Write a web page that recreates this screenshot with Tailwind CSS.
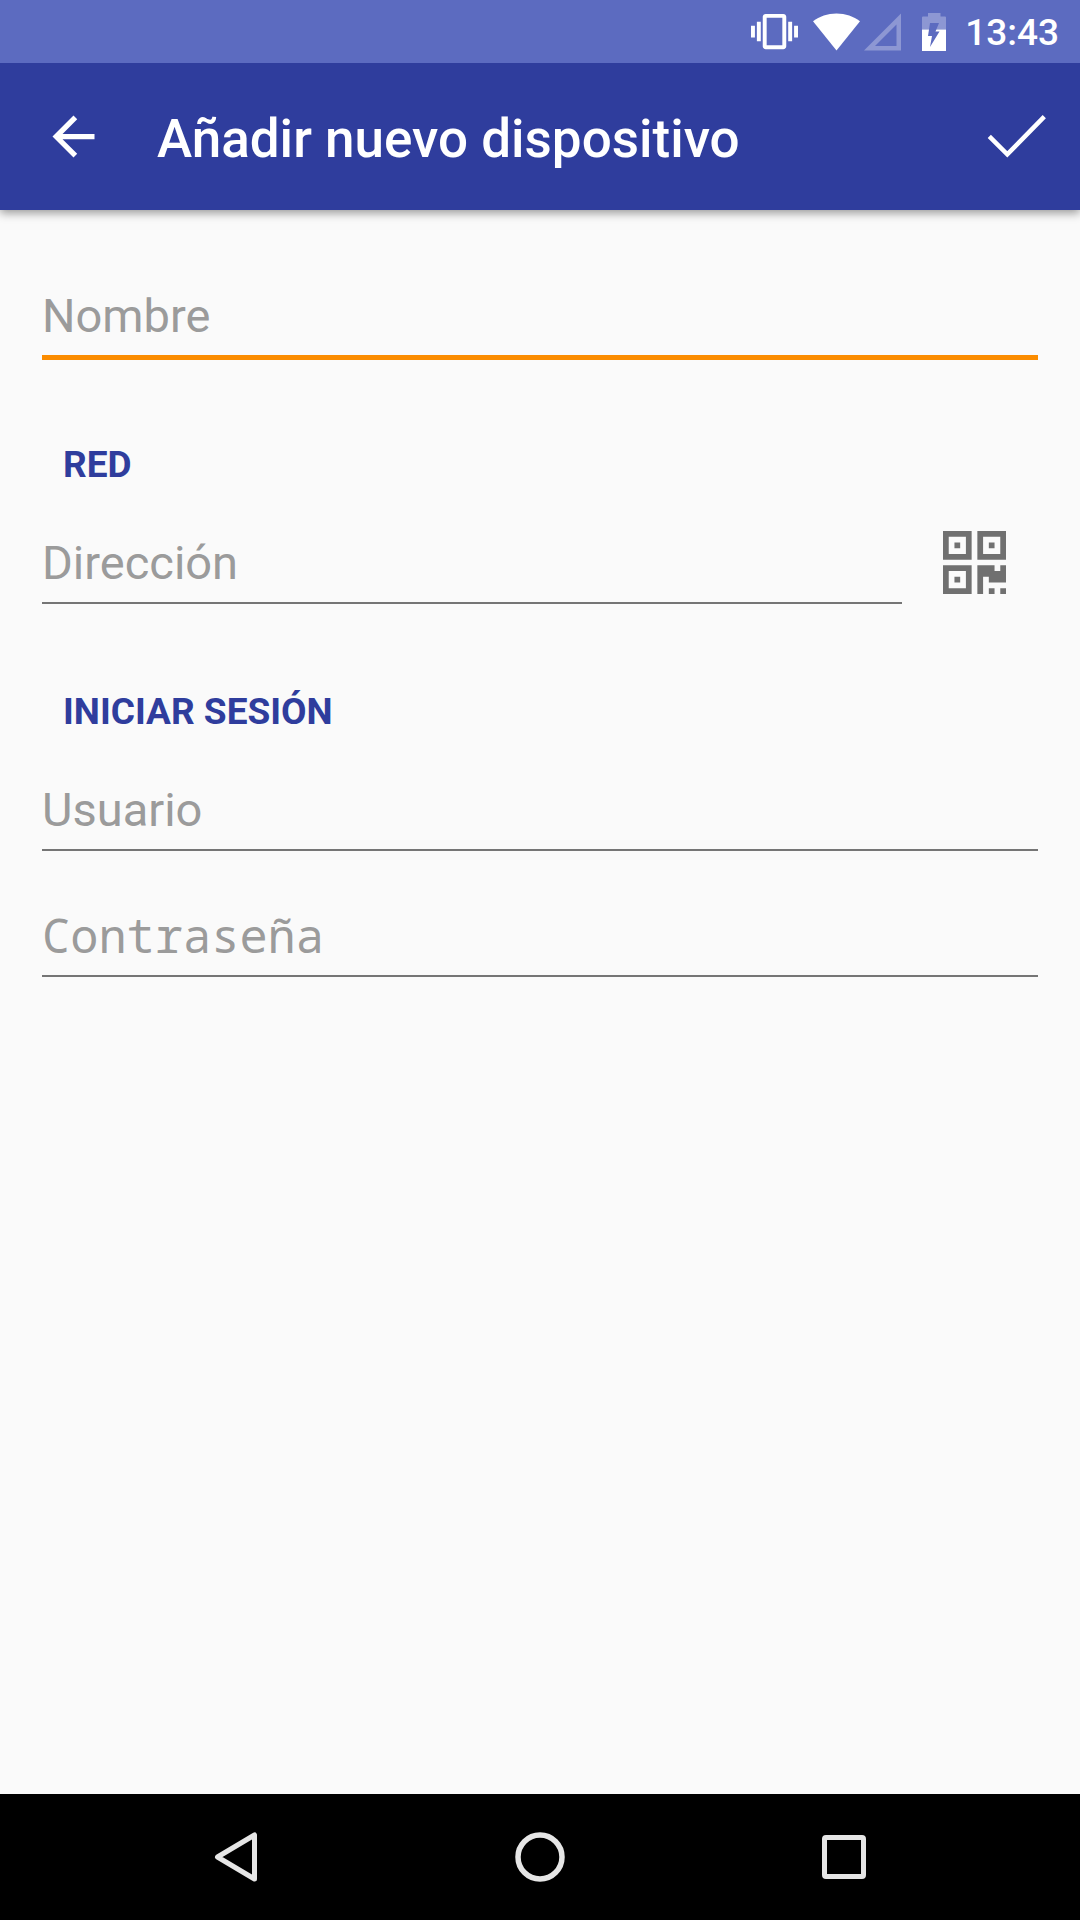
<!DOCTYPE html>
<html lang="es">

<head>
    <meta charset="UTF-8">
    <meta name="viewport" content="width=device-width, initial-scale=1.0">
    <title>Añadir nuevo dispositivo</title>
    <script src="https://cdn.jsdelivr.net/npm/@tailwindcss/browser@4"></script>
</head>

<body class="min-h-screen flex flex-col bg-[#fafafa] font-['Roboto',sans-serif]">
    <!-- Barra de estado -->
    <div class="relative z-10 h-[63px] flex items-center justify-end pr-[21px] bg-[#5c6bc0] text-white">
        <svg class="w-[47px] h-[47px] mr-[15px]" viewBox="0 0 24 24" fill="currentColor" aria-hidden="true">
            <path d="M0 15h2V9H0v6zm3 2h2V7H3v10zm19-8v6h2V9h-2zm-3 8h2V7h-2v10zM16.5 3h-9C6.67 3 6 3.67 6 4.5v15c0 .83.67 1.5 1.5 1.5h9c.83 0 1.5-.67 1.5-1.5v-15c0-.83-.67-1.5-1.5-1.5zM16 19H8V5h8v14z" />
        </svg>
        <svg class="w-[47px] h-[38px] mr-1" viewBox="0 0 47 38" fill="currentColor" aria-hidden="true">
            <path d="M23.5 37.500L0 8.300C6.500 3.300 14.500.500 23.500.500S40.500 3.300 47 8.300z" />
        </svg>
        <svg class="w-[37px] h-[38px] mr-[21px]" viewBox="0 0 37 38" fill="currentColor" fill-rule="evenodd" aria-hidden="true">
            <path class="opacity-30" d="M37 .5v37H0zM32.500 11.500L11 33h21.500z" />
        </svg>
        <svg class="w-[24px] h-[38px] mr-[19px]" viewBox="0 0 24 38" aria-hidden="true">
            <path fill="#fff" fill-opacity=".3" d="M0 16.500V4.500q0-1 1-1h5V0h12.500v3.500H23q1 0 1 1v12z" />
            <path fill="#fff" d="M0 16.500h24V38H0z" />
            <path fill="#5c6bc0" d="M8 10h9l-3.500 8.500h4L8 34l2-11H6z" />
        </svg>
        <span class="pt-[3px] text-[37px] leading-[44px] font-medium">13:43</span>
    </div>

    <!-- Barra de la aplicación -->
    <header class="h-[147px] flex items-center px-[21px] bg-[#2f3d9d] text-white shadow-[0_3px_9px_rgba(0,0,0,0.4)]">
        <button type="button" aria-label="Atrás" class="p-[21px]">
            <svg class="w-[63px] h-[63px]" viewBox="0 0 24 24" fill="currentColor">
                <path d="M20 11H7.830l5.590-5.590L12 4l-8 8 8 8 1.410-1.410L7.830 13H20v-2z" />
            </svg>
        </button>
        <h1 class="flex-1 pt-1 pl-[31px] text-[53px] leading-[60px] font-medium">Añadir nuevo dispositivo</h1>
        <button type="button" aria-label="Guardar" class="p-[10px]">
            <svg class="w-[64px] h-[64px]" viewBox="0 0 64 64" fill="none" stroke="currentColor" stroke-width="4.5">
                <path d="M4.300 31.300L22.300 49.300L59.300 11.700" />
            </svg>
        </button>
    </header>

    <!-- Formulario -->
    <main class="flex-1 px-[42px] pt-[78px]">
        <form>
            <input type="text" name="nombre" placeholder="Nombre" aria-label="Nombre"
                class="block w-full pb-[11px] border-b-5 border-[#fb8c00] text-[47px] leading-[56px] text-gray-900 placeholder:text-[#9b9b9b] outline-none">

            <h2 class="mt-[83px] pl-[21px] text-[37px] leading-[44px] font-bold text-[#2f3d9d]">RED</h2>
            <div class="mt-[48px] flex items-start">
                <input type="text" name="direccion" placeholder="Dirección" aria-label="Dirección"
                    class="flex-1 min-w-0 pb-[11px] border-b-2 border-[#757575] text-[47px] leading-[56px] text-gray-900 placeholder:text-[#9b9b9b] outline-none">
                <button type="button" aria-label="Escanear código QR" class="-mt-1 ml-[41px] mr-[32px]">
                    <svg class="w-[63px] h-[63px]" viewBox="0 0 11 11" fill="#707070" fill-rule="evenodd">
                        <path d="M0 0h5v5H0zM1 1v3h3V1zM2 2h1v1H2z" />
                        <path d="M6 0h5v5H6zM7 1v3h3V1zM8 2h1v1H8z" />
                        <path d="M0 6h5v5H0zM1 7v3h3V7zM2 8h1v1H2z" />
                        <path d="M6 6h3v1h1V6h1v3H8V8H7v3H6zM8 10h1v1H8zM10 10h1v1h-1z" />
                    </svg>
                </button>
            </div>

            <h2 class="mt-[86px] pl-[21px] text-[37px] leading-[44px] font-bold text-[#2f3d9d]">INICIAR SESIÓN</h2>
            <input type="text" name="usuario" placeholder="Usuario" aria-label="Usuario"
                class="mt-[48px] block w-full pb-[11px] border-b-2 border-[#757575] text-[47px] leading-[56px] text-gray-900 placeholder:text-[#9b9b9b] outline-none">
            <input type="password" name="contrasena" placeholder="Contraseña" aria-label="Contraseña"
                class="mt-[56px] block w-full pb-[12px] border-b-2 border-[#757575] font-['Droid_Sans_Mono','Noto_Sans_Mono','DejaVu_Sans_Mono',monospace] text-[47px] leading-[56px] text-gray-900 placeholder:text-[#9b9b9b] outline-none">
        </form>
    </main>

    <!-- Barra de navegación -->
    <nav class="h-[126px] grid grid-cols-3 px-[84px] bg-black text-[#e6e6e6]">
        <button type="button" aria-label="Volver" class="flex items-center justify-center">
            <svg class="w-[60px] h-[60px]" viewBox="0 0 60 60" fill="none" stroke="currentColor" stroke-width="5" stroke-linejoin="round">
                <path d="M11.500 30L48.500 8v44z" />
            </svg>
        </button>
        <button type="button" aria-label="Inicio" class="flex items-center justify-center">
            <svg class="w-[60px] h-[60px]" viewBox="0 0 60 60" fill="none" stroke="currentColor" stroke-width="5.500">
                <circle cx="30" cy="30" r="22" />
            </svg>
        </button>
        <button type="button" aria-label="Recientes" class="flex items-center justify-center">
            <svg class="w-[60px] h-[60px]" viewBox="0 0 60 60" fill="none" stroke="currentColor" stroke-width="5">
                <rect x="10.500" y="10.500" width="39" height="39" rx="1.500" />
            </svg>
        </button>
    </nav>
</body>

</html>
